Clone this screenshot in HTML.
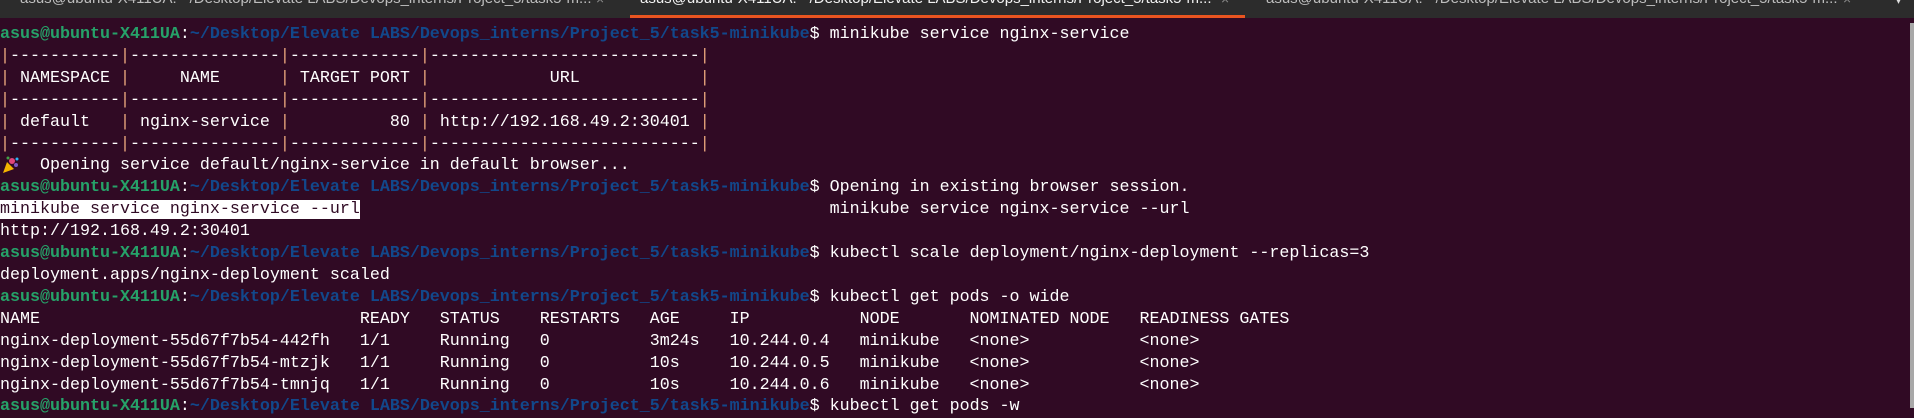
<!DOCTYPE html>
<html><head><meta charset="utf-8">
<style>
html,body{margin:0;padding:0;}
body{width:1914px;height:408px;overflow:hidden;background:#300a24;position:relative;}
.tabbar{position:absolute;left:0;top:0;width:1914px;height:18px;background:#2c2c2c;overflow:hidden;font-family:"Liberation Sans",sans-serif;font-size:15px;}
.tab{position:absolute;top:-10px;color:#bdbdbd;white-space:nowrap;}
.x{position:absolute;top:-9px;color:#8a8a8a;font-size:14px;font-family:"Liberation Sans",sans-serif;}
.ul{position:absolute;left:630px;top:15px;width:615px;height:3px;background:#e95420;}
.sb{position:absolute;left:1910px;top:23px;width:4px;height:385px;background:#a8a8a8;}
pre{position:absolute;left:0;top:24px;margin:0;font-family:"Liberation Mono",monospace;font-size:16.67px;line-height:21.9px;color:#ffffff;}
.g{color:#26a269;font-weight:bold;}
.b{color:#12488b;font-weight:bold;}
.p{color:#e8a57c;}
.h{background:#ffffff;color:#300a24;}
</style></head><body>
<div class="tabbar">
<div class="tab" style="left:20px">asus@ubuntu-X411UA: ~/Desktop/Elevate LABS/Devops_interns/Project_5/task5-m...</div>
<div class="x" style="left:596px">×</div>
<div class="tab" style="left:640px;color:#f2f2f2">asus@ubuntu-X411UA: ~/Desktop/Elevate LABS/Devops_interns/Project_5/task5-m...</div>
<div class="x" style="left:1221px">×</div>
<div class="tab" style="left:1266px">asus@ubuntu-X411UA: ~/Desktop/Elevate LABS/Devops_interns/Project_5/task5-m...</div>
<div class="x" style="left:1843px">×</div>
<div class="x" style="left:1895px;color:#ddd">▾</div>
<div class="ul"></div>
</div>
<div class="sb"></div>
<svg style="position:absolute;left:2px;top:156px" width="18" height="18" viewBox="0 0 18 18"><path d="M1 17 L5 6 L12 13 Z" fill="#f4b400"/><circle cx="10" cy="5" r="3" fill="#e0457b"/><circle cx="14" cy="9" r="2" fill="#7e57c2"/><circle cx="6" cy="2" r="1.5" fill="#43a047"/><circle cx="15" cy="3" r="1.5" fill="#29b6f6"/></svg>
<pre><span class="g">asus@ubuntu-X411UA</span>:<span class="b">~/Desktop/Elevate LABS/Devops_interns/Project_5/task5-minikube</span>$ minikube service nginx-service
<span class="p">|</span>-----------<span class="p">|</span>---------------<span class="p">|</span>-------------<span class="p">|</span>---------------------------<span class="p">|</span>
<span class="p">|</span> NAMESPACE <span class="p">|</span>     NAME      <span class="p">|</span> TARGET PORT <span class="p">|</span>            URL            <span class="p">|</span>
<span class="p">|</span>-----------<span class="p">|</span>---------------<span class="p">|</span>-------------<span class="p">|</span>---------------------------<span class="p">|</span>
<span class="p">|</span> default   <span class="p">|</span> nginx-service <span class="p">|</span>          80 <span class="p">|</span> http://192.168.49.2:30401 <span class="p">|</span>
<span class="p">|</span>-----------<span class="p">|</span>---------------<span class="p">|</span>-------------<span class="p">|</span>---------------------------<span class="p">|</span>
    Opening service default/nginx-service in default browser...
<span class="g">asus@ubuntu-X411UA</span>:<span class="b">~/Desktop/Elevate LABS/Devops_interns/Project_5/task5-minikube</span>$ Opening in existing browser session.
<span class="h">minikube service nginx-service --url</span>                                               minikube service nginx-service --url
http://192.168.49.2:30401
<span class="g">asus@ubuntu-X411UA</span>:<span class="b">~/Desktop/Elevate LABS/Devops_interns/Project_5/task5-minikube</span>$ kubectl scale deployment/nginx-deployment --replicas=3
deployment.apps/nginx-deployment scaled
<span class="g">asus@ubuntu-X411UA</span>:<span class="b">~/Desktop/Elevate LABS/Devops_interns/Project_5/task5-minikube</span>$ kubectl get pods -o wide
NAME                                READY   STATUS    RESTARTS   AGE     IP           NODE       NOMINATED NODE   READINESS GATES
nginx-deployment-55d67f7b54-442fh   1/1     Running   0          3m24s   10.244.0.4   minikube   &lt;none&gt;           &lt;none&gt;
nginx-deployment-55d67f7b54-mtzjk   1/1     Running   0          10s     10.244.0.5   minikube   &lt;none&gt;           &lt;none&gt;
nginx-deployment-55d67f7b54-tmnjq   1/1     Running   0          10s     10.244.0.6   minikube   &lt;none&gt;           &lt;none&gt;
<span class="g">asus@ubuntu-X411UA</span>:<span class="b">~/Desktop/Elevate LABS/Devops_interns/Project_5/task5-minikube</span>$ kubectl get pods -w</pre>
</body></html>
